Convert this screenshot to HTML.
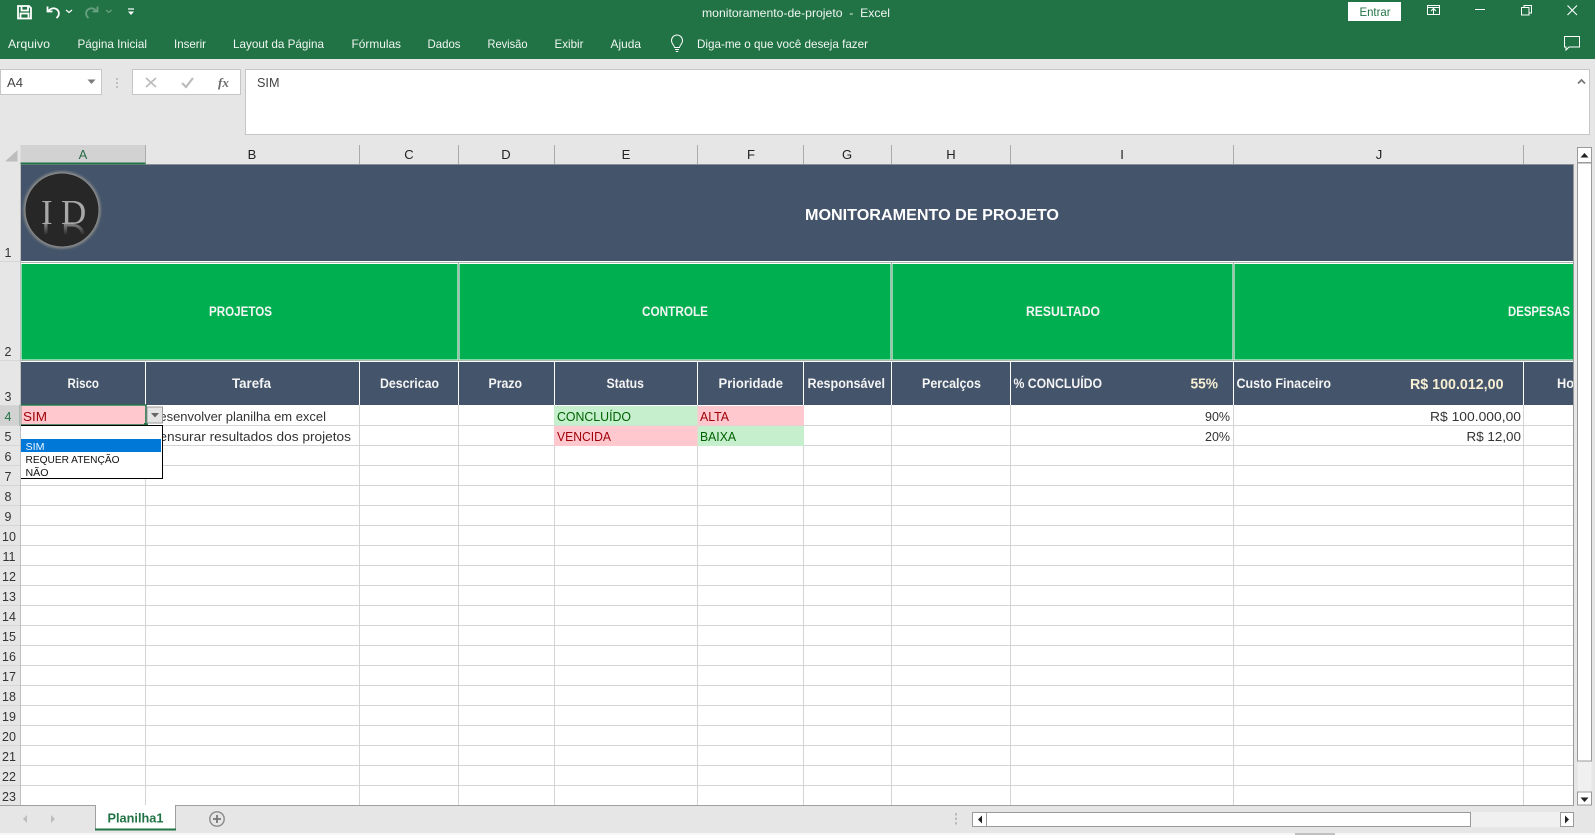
<!DOCTYPE html>
<html lang="pt-BR">
<head>
<meta charset="utf-8">
<title>monitoramento-de-projeto - Excel</title>
<style>
html,body{margin:0;padding:0;background:#fff;width:1595px;height:835px;overflow:hidden}
svg{display:block}
text{font-family:"Liberation Sans",sans-serif;white-space:pre}
.rb{font-size:12px;fill:#f0f6f2}
.cl{font-size:13px;fill:#222}
.rw{font-size:12.5px;fill:#333;text-anchor:middle}
.h{font-size:13.5px;font-weight:bold;fill:#f4f4f4}
.c{font-size:13px;fill:#333}
.dd{font-size:10.5px;fill:#111}
</style>
</head>
<body>
<svg xmlns="http://www.w3.org/2000/svg" width="1595" height="835" viewBox="0 0 1595 835">
<defs>
<filter id="b1" x="-20%" y="-20%" width="140%" height="140%"><feGaussianBlur stdDeviation="1.2"/></filter>
<linearGradient id="fade" gradientUnits="userSpaceOnUse" x1="0" y1="224" x2="0" y2="213"><stop offset="0" stop-color="#aaa" stop-opacity=".7"/><stop offset="1" stop-color="#aaa" stop-opacity="0"/></linearGradient>
<clipPath id="clipHo"><rect x="1530" y="362" width="43" height="43"/></clipPath>
</defs>

<!-- app background -->
<rect width="1595" height="835" fill="#e6e6e6"/>
<rect width="1595" height="59" fill="#217346"/>

<!-- QAT -->
<g fill="none" stroke="#fff" stroke-width="1.6">
<path d="M18 6h11l2 2v10.5H18z" stroke-width="1.8"/>
<path d="M21.500 6v4.500h6.500V6" stroke-width="1.800"/>
<path d="M20.500 18.500V13.500h8V18.500" stroke-width="1.800"/>
<path d="M47.500 6.500v5h5M48 11.500c3-3.800 6.500-4 9-2 2.800 2.300 2.300 6.500-.5 8.500" stroke-width="1.800"/>
<path d="M66 10l3 2.500 3-2.500" stroke-width="1.200"/>
<g opacity=".32"><path d="M97.500 6.500v5h-5M97 11.500c-3-3.800-6.500-4-9-2-2.800 2.300-2.300 6.500.5 8.500" stroke-width="1.800"/>
<path d="M106 10l2.800 2.500 2.800-2.500" stroke-width="1.200"/></g>
<path d="M128 9h6" stroke-width="1.200"/>
</g>
<path d="M128 11.500h6l-3 3.500z" fill="#fff"/>

<!-- title -->
<text x="702" y="17" font-size="12" fill="#f0f6f2" textLength="188" lengthAdjust="spacingAndGlyphs">monitoramento-de-projeto  -  Excel</text>

<!-- window buttons -->
<rect x="1348" y="2" width="53" height="19" fill="#fff"/>
<text x="1359.500" y="16" font-size="12" fill="#217346" textLength="31" lengthAdjust="spacingAndGlyphs">Entrar</text>
<g fill="none" stroke="#fff" stroke-width="1">
<rect x="1427.500" y="5.500" width="12" height="9"/>
<path d="M1427.500 7.500h12M1433.500 14v-5M1431 11l2.500-2.500 2.500 2.500"/>
<path d="M1475 9.500h10"/>
<rect x="1521.500" y="7.500" width="7.500" height="7.500"/>
<path d="M1524 7.500V5.500h7.500v7.500h-2.500"/>
<path d="M1567.500 5.500l9.500 9.500M1577 5.500l-9.500 9.500" stroke-width="1.100"/>
<path d="M1564.500 36.500h15v10.500h-10.500l-3 3v-3h-1.500z"/>
</g>

<!-- ribbon tabs -->
<text class="rb" x="8" y="48" textLength="42" lengthAdjust="spacingAndGlyphs">Arquivo</text>
<text class="rb" x="77.500" y="48" textLength="69.500" lengthAdjust="spacingAndGlyphs">Página Inicial</text>
<text class="rb" x="174" y="48" textLength="32" lengthAdjust="spacingAndGlyphs">Inserir</text>
<text class="rb" x="233" y="48" textLength="91" lengthAdjust="spacingAndGlyphs">Layout da Página</text>
<text class="rb" x="351.500" y="48" textLength="49.500" lengthAdjust="spacingAndGlyphs">Fórmulas</text>
<text class="rb" x="427.500" y="48" textLength="33" lengthAdjust="spacingAndGlyphs">Dados</text>
<text class="rb" x="487.500" y="48" textLength="40" lengthAdjust="spacingAndGlyphs">Revisão</text>
<text class="rb" x="554.500" y="48" textLength="29" lengthAdjust="spacingAndGlyphs">Exibir</text>
<text class="rb" x="610.500" y="48" textLength="30.500" lengthAdjust="spacingAndGlyphs">Ajuda</text>
<path d="M674.500 47.500c-.3-2.500-3-3.500-3-7a5.500 5.500 0 0 1 11 0c0 3.500-2.700 4.500-3 7zM675 49.500h4M675.800 51.500h2.500" fill="none" stroke="#fff" stroke-width="1"/>
<text class="rb" x="697" y="48" textLength="171" lengthAdjust="spacingAndGlyphs">Diga-me o que você deseja fazer</text>

<!-- name box -->
<rect x="0.500" y="69.500" width="101" height="25" fill="#fff" stroke="#c6c6c6"/>
<text x="7" y="87" font-size="13" fill="#444" textLength="16" lengthAdjust="spacingAndGlyphs">A4</text>
<path d="M87.500 79.500h8l-4 4.500z" fill="#7a7a7a"/>
<path d="M117 78v2M117 82v2M117 86v2" stroke="#b4b4b4" stroke-width="1.500" fill="none"/>
<rect x="132.500" y="69.500" width="108" height="25" fill="#fff" stroke="#c6c6c6"/>
<path d="M146 78l10 9M156 78l-10 9" stroke="#bcbcbc" stroke-width="1.700" fill="none"/>
<path d="M182 83l4 4 7-9" stroke="#bcbcbc" stroke-width="2.200" fill="none"/>
<text x="218" y="87" font-size="13" font-style="italic" font-weight="bold" fill="#6a6a6a" style="font-family:'Liberation Serif',serif" textLength="11" lengthAdjust="spacingAndGlyphs">fx</text>

<!-- formula bar -->
<rect x="245.500" y="69.500" width="1344" height="65" fill="#fff" stroke="#c6c6c6"/>
<text x="257" y="87" font-size="13" fill="#444" textLength="22.500" lengthAdjust="spacingAndGlyphs">SIM</text>
<path d="M1578 83.500l3.500-3.500 3.500 3.500" fill="none" stroke="#777" stroke-width="1.800"/>

<!-- column headers -->
<rect x="0" y="145" width="1573" height="20" fill="#e6e6e6"/>
<path d="M5 161.500L17.500 150v11.500z" fill="#bdbdbd"/>
<rect x="20.500" y="145" width="125" height="18" fill="#d2d2d2"/>
<g stroke="#ababab" fill="none">
<path d="M145.500 145v19M359.500 145v19M458.500 145v19M554.500 145v19M697.500 145v19M803.500 145v19M891.500 145v19M1010.500 145v19M1233.500 145v19M1523.500 145v19"/>
</g>
<text class="cl" x="83" y="159" text-anchor="middle" style="fill:#2b6a47">A</text>
<text class="cl" x="252" y="159" text-anchor="middle">B</text>
<text class="cl" x="409" y="159" text-anchor="middle">C</text>
<text class="cl" x="506" y="159" text-anchor="middle">D</text>
<text class="cl" x="626" y="159" text-anchor="middle">E</text>
<text class="cl" x="751" y="159" text-anchor="middle">F</text>
<text class="cl" x="847" y="159" text-anchor="middle">G</text>
<text class="cl" x="951" y="159" text-anchor="middle">H</text>
<text class="cl" x="1122" y="159" text-anchor="middle">I</text>
<text class="cl" x="1379" y="159" text-anchor="middle">J</text>

<!-- row headers -->
<rect x="0" y="165" width="20" height="640" fill="#e6e6e6"/>
<rect x="0" y="405" width="20" height="20" fill="#d2d2d2"/>
<g stroke="#d6d6d6" fill="none">
<path d="M0 261.500h20M0 360.500h20M0 405.500h20M0 425.500h20M0 445.500h20M0 465.500h20M0 485.500h20M0 505.500h20M0 525.500h20M0 545.500h20M0 565.500h20M0 585.500h20M0 605.500h20M0 625.500h20M0 645.500h20M0 665.500h20M0 685.500h20M0 705.500h20M0 725.500h20M0 745.500h20M0 765.500h20M0 785.500h20"/>
</g>
<text class="rw" x="8" y="257">1</text>
<text class="rw" x="8" y="356">2</text>
<text class="rw" x="8" y="401">3</text>
<text class="rw" x="8" y="421" style="fill:#217346">4</text>
<text class="rw" x="8" y="441">5</text>
<text class="rw" x="8" y="461">6</text>
<text class="rw" x="8" y="481">7</text>
<text class="rw" x="8" y="501">8</text>
<text class="rw" x="8" y="521">9</text>
<text class="rw" x="9" y="541">10</text>
<text class="rw" x="9" y="561">11</text>
<text class="rw" x="9" y="581">12</text>
<text class="rw" x="9" y="601">13</text>
<text class="rw" x="9" y="621">14</text>
<text class="rw" x="9" y="641">15</text>
<text class="rw" x="9" y="661">16</text>
<text class="rw" x="9" y="681">17</text>
<text class="rw" x="9" y="701">18</text>
<text class="rw" x="9" y="721">19</text>
<text class="rw" x="9" y="741">20</text>
<text class="rw" x="9" y="761">21</text>
<text class="rw" x="9" y="781">22</text>
<text class="rw" x="9" y="801">23</text>

<!-- sheet -->
<rect x="20" y="164" width="1553" height="641" fill="#fff"/>
<rect x="20.500" y="165" width="1552.500" height="96" fill="#44546a"/>
<path d="M20 164.500h1553" stroke="#8a8f96"/>
<path d="M20.500 163.500h125" stroke="#217346" stroke-width="2"/>

<!-- logo -->
<circle cx="62" cy="210" r="38.500" fill="#8f8f8c" filter="url(#b1)"/>
<circle cx="62" cy="210" r="36.500" fill="#272727"/>
<text x="41" y="224" font-size="35" fill="#a8a8a8" style="font-family:'Liberation Serif',serif">I</text>
<text x="61" y="224" font-size="35" fill="#a8a8a8" style="font-family:'Liberation Serif',serif">D</text>
<g transform="translate(0 448) scale(1 -1)" fill="url(#fade)" font-size="35" style="font-family:'Liberation Serif',serif">
<text x="41" y="224" fill="url(#fade)">I</text>
<text x="61" y="224" fill="url(#fade)">D</text>
</g>
<text x="805" y="220" font-size="16" font-weight="bold" fill="#fff" textLength="254" lengthAdjust="spacingAndGlyphs">MONITORAMENTO DE PROJETO</text>

<!-- section band -->
<rect x="21.500" y="264" width="436" height="95.500" fill="#00b050"/>
<rect x="459.500" y="264" width="431" height="95.500" fill="#00b050"/>
<rect x="892.500" y="264" width="340" height="95.500" fill="#00b050"/>
<rect x="1234.500" y="264" width="338.500" height="95.500" fill="#00b050"/>
<path d="M20 262.500h1553M20 360.500h1553M458.500 263v97M891.500 263v97M1233.500 263v97" stroke="#a8b8ae" fill="none"/>
<text class="h" x="209" y="316" textLength="63" lengthAdjust="spacingAndGlyphs">PROJETOS</text>
<text class="h" x="642" y="316" textLength="66" lengthAdjust="spacingAndGlyphs">CONTROLE</text>
<text class="h" x="1026" y="316" textLength="74" lengthAdjust="spacingAndGlyphs">RESULTADO</text>
<text class="h" x="1508" y="316" textLength="62" lengthAdjust="spacingAndGlyphs">DESPESAS</text>

<!-- header row -->
<rect x="20.500" y="362" width="1552.500" height="43" fill="#44546a"/>
<path d="M145.500 362v43M359.500 362v43M458.500 362v43M554.500 362v43M697.500 362v43M803.500 362v43M891.500 362v43M1010.500 362v43M1233.500 362v43M1523.500 362v43" stroke="#fff" fill="none"/>
<text class="h" x="67.500" y="388" textLength="31.500" lengthAdjust="spacingAndGlyphs">Risco</text>
<text class="h" x="232" y="388" textLength="39" lengthAdjust="spacingAndGlyphs">Tarefa</text>
<text class="h" x="380" y="388" textLength="59" lengthAdjust="spacingAndGlyphs">Descricao</text>
<text class="h" x="488.500" y="388" textLength="33.500" lengthAdjust="spacingAndGlyphs">Prazo</text>
<text class="h" x="606.500" y="388" textLength="37.500" lengthAdjust="spacingAndGlyphs">Status</text>
<text class="h" x="718.500" y="388" textLength="64.500" lengthAdjust="spacingAndGlyphs">Prioridade</text>
<text class="h" x="807.500" y="388" textLength="77.500" lengthAdjust="spacingAndGlyphs">Responsável</text>
<text class="h" x="922" y="388" textLength="59" lengthAdjust="spacingAndGlyphs">Percalços</text>
<text class="h" x="1013.500" y="388" textLength="88.500" lengthAdjust="spacingAndGlyphs">% CONCLUÍDO</text>
<text class="h" x="1190.500" y="388.500" style="fill:#f7efd4;font-size:14.5px" textLength="27.500" lengthAdjust="spacingAndGlyphs">55%</text>
<text class="h" x="1236.500" y="388" textLength="94.500" lengthAdjust="spacingAndGlyphs">Custo Finaceiro</text>
<text class="h" x="1410" y="389" style="fill:#f7efd4;font-size:14.5px" textLength="93.500" lengthAdjust="spacingAndGlyphs">R$ 100.012,00</text>
<text class="h" x="1557" y="388" clip-path="url(#clipHo)" textLength="17" lengthAdjust="spacingAndGlyphs">Ho</text>

<!-- body gridlines -->
<g stroke="#d4d4d4" fill="none">
<path d="M20 425.500h1553M20 445.500h1553M20 465.500h1553M20 485.500h1553M20 505.500h1553M20 525.500h1553M20 545.500h1553M20 565.500h1553M20 585.500h1553M20 605.500h1553M20 625.500h1553M20 645.500h1553M20 665.500h1553M20 685.500h1553M20 705.500h1553M20 725.500h1553M20 745.500h1553M20 765.500h1553M20 785.500h1553"/>
<path d="M145.500 405v400M359.500 405v400M458.500 405v400M554.500 405v400M697.500 405v400M803.500 405v400M891.500 405v400M1010.500 405v400M1233.500 405v400M1523.500 405v400"/>
</g>

<!-- conditional cells -->
<rect x="554" y="406" width="143.500" height="19.500" fill="#c6efce"/>
<rect x="697.500" y="406" width="106.500" height="19.500" fill="#ffc7ce"/>
<rect x="554" y="426" width="143.500" height="20" fill="#ffc7ce"/>
<rect x="697.500" y="426" width="106.500" height="20" fill="#c6efce"/>
<text class="c" x="557" y="421" style="fill:#006100" textLength="74" lengthAdjust="spacingAndGlyphs">CONCLUÍDO</text>
<text class="c" x="700" y="421" style="fill:#9c0006" textLength="29" lengthAdjust="spacingAndGlyphs">ALTA</text>
<text class="c" x="557" y="441" style="fill:#9c0006" textLength="54" lengthAdjust="spacingAndGlyphs">VENCIDA</text>
<text class="c" x="700" y="441" style="fill:#006100" textLength="36" lengthAdjust="spacingAndGlyphs">BAIXA</text>

<text class="c" x="150" y="421" textLength="176" lengthAdjust="spacingAndGlyphs">Desenvolver planilha em excel</text>
<text class="c" x="148" y="441" textLength="203" lengthAdjust="spacingAndGlyphs">Mensurar resultados dos projetos</text>
<text class="c" x="1205" y="421" textLength="25" lengthAdjust="spacingAndGlyphs">90%</text>
<text class="c" x="1205" y="441" textLength="25" lengthAdjust="spacingAndGlyphs">20%</text>
<text class="c" x="1430" y="421" textLength="91" lengthAdjust="spacingAndGlyphs">R$ 100.000,00</text>
<text class="c" x="1466.500" y="441" textLength="54.500" lengthAdjust="spacingAndGlyphs">R$ 12,00</text>

<!-- selected cell -->
<rect x="21" y="406" width="124" height="19" fill="#ffc7ce"/>
<rect x="20.500" y="405" width="125.500" height="20" fill="none" stroke="#217346" stroke-width="1.500"/>
<text class="c" x="23" y="421" style="fill:#9c0006" textLength="24" lengthAdjust="spacingAndGlyphs">SIM</text>
<rect x="144" y="423" width="4" height="4" fill="#217346"/>

<!-- dropdown button -->
<rect x="147" y="407" width="15.500" height="16" fill="#e4e4e4" stroke="#9a9a9a"/>
<path d="M151 413h8l-4 4.500z" fill="#666"/>

<!-- dropdown list -->
<rect x="20.500" y="425.500" width="142" height="53" fill="#fff" stroke="#000"/>
<rect x="21" y="439" width="140" height="13" fill="#0078d7"/>
<text class="dd" x="25.500" y="450" style="fill:#eef6ff" textLength="19" lengthAdjust="spacingAndGlyphs">SIM</text>
<text class="dd" x="25.500" y="463" textLength="94" lengthAdjust="spacingAndGlyphs">REQUER ATENÇÃO</text>
<text class="dd" x="25.500" y="476" textLength="23" lengthAdjust="spacingAndGlyphs">NÃO</text>

<!-- sheet edges -->
<path d="M20.500 164v641" stroke="#bfbfbf" fill="none"/>
<path d="M1573.500 164v641" stroke="#9a9a9a" fill="none"/>

<!-- vertical scrollbar -->
<rect x="1577.500" y="147.500" width="14" height="15" fill="#fff" stroke="#9a9a9a"/>
<path d="M1580.500 157.500h8l-4-4.500z" fill="#222"/>
<rect x="1577.500" y="163" width="14" height="598" fill="#fff" stroke="#9a9a9a"/>
<rect x="1578" y="761.500" width="13.500" height="30" fill="#f0f0f0"/>
<rect x="1577.500" y="792" width="14" height="13" fill="#fff" stroke="#9a9a9a"/>
<path d="M1580.500 797.500h8l-4 4.500z" fill="#222"/>

<!-- bottom bar -->
<path d="M0 805.500h1574" stroke="#a0a0a0" fill="none"/>
<rect x="95.500" y="805" width="80" height="24" fill="#fff"/>
<path d="M95.500 805v24M175.500 805v24" stroke="#a0a0a0" fill="none"/>
<path d="M95 829.500h81" stroke="#217346" stroke-width="2" fill="none"/>
<text x="107.500" y="822.500" font-size="12.500" font-weight="bold" fill="#217346" textLength="56" lengthAdjust="spacingAndGlyphs">Planilha1</text>
<path d="M27 815v8l-4-4zM51 815v8l4-4z" fill="#bdbdbd"/>
<circle cx="217" cy="819" r="7.200" fill="none" stroke="#8a8a8a" stroke-width="1.400"/>
<path d="M217 815v8M213 819h8" stroke="#777" stroke-width="1.800" fill="none"/>
<path d="M956 813v2.500M956 817.500v2.500M956 822v2.500" stroke="#bcbcbc" stroke-width="2" fill="none"/>

<!-- horizontal scrollbar -->
<rect x="972" y="812" width="602" height="15" fill="#f0f0f0"/>
<rect x="972.500" y="812.500" width="14" height="14" fill="#fff" stroke="#9a9a9a"/>
<path d="M982 815.500v8l-4-4z" fill="#222"/>
<rect x="986.500" y="812.500" width="484" height="14" fill="#fff" stroke="#9a9a9a"/>
<rect x="1560.500" y="812.500" width="13" height="14" fill="#fff" stroke="#9a9a9a"/>
<path d="M1565 815.500v8l4-4z" fill="#222"/>

<!-- bottom strip -->
<rect x="0" y="833" width="1595" height="2" fill="#f7f7f7"/>
<rect x="1295" y="833" width="40" height="2" fill="#c0c0c0"/>
</svg>
</body>
</html>
